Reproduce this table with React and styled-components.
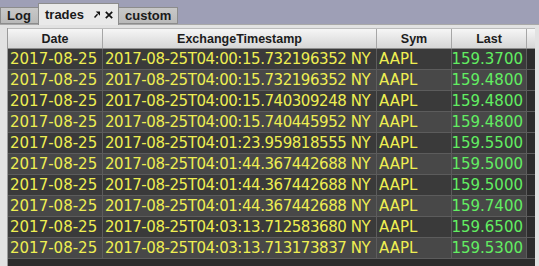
import React from "react";
import styled, { createGlobalStyle } from "styled-components";

const Global = createGlobalStyle`
  html, body { margin: 0; padding: 0; background: #9e9fb6; overflow: hidden; }
  #root { width: 539px; height: 266px; }
`;

const Page = styled.div`
  width: 539px;
  height: 266px;
  display: flex;
  flex-direction: column;
  background: #9e9fb6;
`;

const TabBar = styled.div`
  display: flex;
  align-items: flex-end;
  height: 24px;
  position: relative;
  z-index: 1;
`;

const Tab = styled.div`
  box-sizing: border-box;
  height: ${(p) => (p.$active ? "22px" : "17px")};
  margin-bottom: ${(p) => (p.$active ? "-1px" : "0")};
  padding: 0 0 0 ${(p) => (p.$active ? "6px" : "6px")};
  display: flex;
  align-items: center;
  font-family: "Liberation Sans", Arial, sans-serif;
  font-weight: bold;
  font-size: 13px;
  color: #1a1a1a;
  background: ${(p) =>
    p.$active ? "#e9e9e9" : "linear-gradient(#c8c8c8, #b9b9b9)"};
  border: 1px solid #8c8c8c;
  border-bottom: ${(p) => (p.$active ? "none" : "1px solid #8c8c8c")};
  width: ${(p) => p.$w}px;
  margin-left: ${(p) => (p.$ml ? p.$ml : 0)}px;
`;

const TabIcons = styled.span`
  display: flex;
  align-items: center;
  gap: 5px;
  margin-left: 10px;
`;

const Panel = styled.div`
  flex: 1;
  box-sizing: border-box;
  background: #e2e2e2;
  border-top: 1px solid #a9a9a9;
  padding: 3px 4px 0 7px;
  display: flex;
  min-height: 0;
`;

const TableBox = styled.div`
  flex: 1;
  background: #2c2c2c;
  border-left: 1px solid #9a9a9a;
  display: flex;
  flex-direction: column;
  overflow: hidden;
`;

const cols = "95px 274px 75px 75px 1fr";

const HeaderRow = styled.div`
  display: grid;
  grid-template-columns: ${cols};
  height: 19px;
  background: linear-gradient(#f6f6f6, #e4e4e4 55%, #d6d6d6);
  border-top: 1px solid #bcbcbc;
  border-bottom: 1px solid #8e8e8e;
`;

const HeadCell = styled.div`
  display: flex;
  align-items: center;
  justify-content: center;
  font-family: "Liberation Sans", Arial, sans-serif;
  font-weight: bold;
  font-size: 12.5px;
  color: #1c1c1c;
  border-right: 1px solid #a6a6a6;
  box-sizing: border-box;
  &:last-child { border-right: none; }
`;

const Row = styled.div`
  display: grid;
  grid-template-columns: ${cols};
  height: 21px;
  box-sizing: border-box;
  border-bottom: 1px solid #5c5c5c;
`;

const Cell = styled.div`
  box-sizing: border-box;
  background: ${(p) => (p.$alt ? "#484848" : "#3a3a3a")};
  border-right: 1px solid #5c5c5c;
  display: flex;
  align-items: center;
  justify-content: ${(p) => (p.$right ? "flex-end" : "flex-start")};
  padding: 0 ${(p) => (p.$right ? "3px" : "0")} 0 2px;
  font-family: "DejaVu Sans", "Liberation Sans", sans-serif;
  font-size: 15px;
  letter-spacing: ${(p) => (p.$tight ? "-0.45px" : "0")};
  color: ${(p) => (p.$green ? "#62ee62" : "#eeee52")};
  white-space: nowrap;
  overflow: hidden;
`;

const Filler = styled.div`
  background: #2c2c2c;
`;

const rows = [
  ["2017-08-25T04:00:15.732196352 NY", "159.3700"],
  ["2017-08-25T04:00:15.732196352 NY", "159.4800"],
  ["2017-08-25T04:00:15.740309248 NY", "159.4800"],
  ["2017-08-25T04:00:15.740445952 NY", "159.4800"],
  ["2017-08-25T04:01:23.959818555 NY", "159.5500"],
  ["2017-08-25T04:01:44.367442688 NY", "159.5000"],
  ["2017-08-25T04:01:44.367442688 NY", "159.5000"],
  ["2017-08-25T04:01:44.367442688 NY", "159.7400"],
  ["2017-08-25T04:03:13.712583680 NY", "159.6500"],
  ["2017-08-25T04:03:13.713173837 NY", "159.5300"],
];

const PopIcon = () => (
  <svg width="6" height="7" viewBox="0 0 6 7">
    <path d="M0.5 6.5 L3.5 3.2" stroke="#111" strokeWidth="1.5" />
    <path d="M1.8 0.5 L6 0.5 L6 4.8 Z" fill="#111" />
  </svg>
);

const CloseIcon = () => (
  <svg width="8" height="8" viewBox="0 0 8 8">
    <path d="M0.8 0.8 L7.2 7.2 M7.2 0.8 L0.8 7.2" stroke="#111" strokeWidth="1.7" />
  </svg>
);

export default function App() {
  return (
    <Page>
      <Global />
      <TabBar>
        <Tab $w={39}>Log</Tab>
        <Tab $active $w={81} $ml={-1}>
          trades
          <TabIcons>
            <PopIcon />
            <CloseIcon />
          </TabIcons>
        </Tab>
        <Tab $w={60} $ml={-1}>custom</Tab>
      </TabBar>
      <Panel>
        <TableBox>
          <HeaderRow>
            <HeadCell>Date</HeadCell>
            <HeadCell>ExchangeTimestamp</HeadCell>
            <HeadCell>Sym</HeadCell>
            <HeadCell>Last</HeadCell>
            <HeadCell />
          </HeaderRow>
          {rows.map(([ts, last], i) => {
            const alt = i % 2 === 1;
            return (
              <Row key={i}>
                <Cell $alt={alt}>2017-08-25</Cell>
                <Cell $alt={alt} $tight>{ts}</Cell>
                <Cell $alt={alt}>AAPL</Cell>
                <Cell $alt={alt} $right $green>{last}</Cell>
                <Filler />
              </Row>
            );
          })}
        </TableBox>
      </Panel>
    </Page>
  );
}
